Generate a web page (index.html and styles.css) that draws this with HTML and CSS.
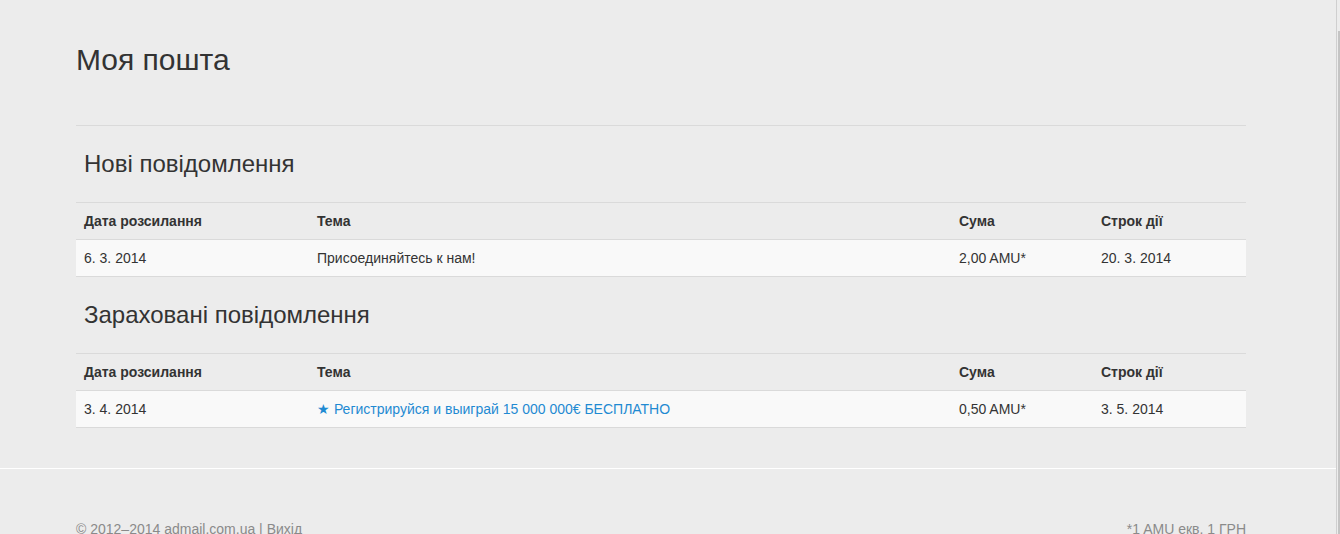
FILE: index.html
```html
<!DOCTYPE html>
<html lang="uk">

<head>
    <meta charset="UTF-8">
    <meta name="viewport" content="width=device-width, initial-scale=1.0">
    <title>Моя пошта</title>

    <link rel="stylesheet" href="styles.css">
</head>

<body>
    <div class="page">
        <div class="main">
            <div class="container">
                <h1 class="page-title">Моя пошта</h1>
                <hr class="divider">

                <section class="mail-section">
                    <h2>Нові повідомлення</h2>
                    <table class="mail-table">
                        <thead>
                            <tr>
                                <th class="col-date">Дата розсилання</th>
                                <th class="col-subject">Тема</th>
                                <th class="col-sum">Сума</th>
                                <th class="col-term">Строк дії</th>
                            </tr>
                        </thead>
                        <tbody>
                            <tr>
                                <td>6. 3. 2014</td>
                                <td>Присоединяйтесь к нам!</td>
                                <td>2,00 AMU*</td>
                                <td>20. 3. 2014</td>
                            </tr>
                        </tbody>
                    </table>
                </section>

                <section class="mail-section">
                    <h2>Зараховані повідомлення</h2>
                    <table class="mail-table">
                        <thead>
                            <tr>
                                <th class="col-date">Дата розсилання</th>
                                <th class="col-subject">Тема</th>
                                <th class="col-sum">Сума</th>
                                <th class="col-term">Строк дії</th>
                            </tr>
                        </thead>
                        <tbody>
                            <tr>
                                <td>3. 4. 2014</td>
                                <td><a href="#">★ Регистрируйся и выиграй 15 000 000€ БЕСПЛАТНО</a></td>
                                <td>0,50 AMU*</td>
                                <td>3. 5. 2014</td>
                            </tr>
                        </tbody>
                    </table>
                </section>
            </div>

            <footer class="footer">
                <div class="container footer-row">
                    <span>© 2012–2014 admail.com.ua | <a href="#">Вихід</a></span>
                    <span>*1 AMU екв. 1 ГРН</span>
                </div>
            </footer>
        </div>

        <div class="scrollbar">
            <div class="thumb"></div>
        </div>
    </div>
</body>

</html>
```

FILE: styles.css
```css
html,
body {
    height: 100%;
    overflow: hidden;
}

body {
    font-family: "Liberation Sans", Arial, sans-serif;
    font-size: 14px;
    line-height: 20px;
    color: #333;
    margin: 0;
    padding: 0;
    background-color: #ececec;
}

.page {
    display: flex;
    height: 100%;
}

.main {
    flex: 1;
}

.container {
    width: 1170px;
    margin-left: 76px;
}

.page-title {
    margin: 43px 0 0;
    font-size: 30px;
    font-weight: normal;
    line-height: 33px;
}

.divider {
    margin: 49px 0 0;
    border: 0;
    border-top: 1px solid #dadada;
}

.mail-section h2 {
    margin: 25px 0 25px;
    padding-left: 8px;
    font-size: 24px;
    font-weight: normal;
    line-height: 26px;
}

.mail-table {
    width: 100%;
    border-collapse: collapse;
    table-layout: fixed;
    border-bottom: 1px solid #dadada;
}

.mail-table th,
.mail-table td {
    padding: 8px;
    text-align: left;
    border-top: 1px solid #dadada;
    white-space: nowrap;
}

.mail-table th {
    font-weight: bold;
}

.mail-table tbody tr {
    background-color: #f9f9f9;
}

.col-date {
    width: 217px;
}

.col-subject {
    width: 626px;
}

.col-sum {
    width: 126px;
}

.col-term {
    width: 137px;
}

.mail-table a {
    color: #1f8ad2;
    text-decoration: none;
}

.footer {
    margin-top: 40px;
    padding-top: 50px;
    border-top: 1px solid #fff;
    color: #8a8a8a;
}

.footer-row {
    display: flex;
    justify-content: space-between;
}

.footer a {
    color: #8a8a8a;
    text-decoration: none;
}

.scrollbar {
    width: 3px;
    border-left: 1px solid #cfcfcf;
    background-color: #ececec;
}

.thumb {
    width: 2px;
    height: 100%;
    margin: 31px 0 0 1px;
    background-color: #c4c4c4;
}
```
